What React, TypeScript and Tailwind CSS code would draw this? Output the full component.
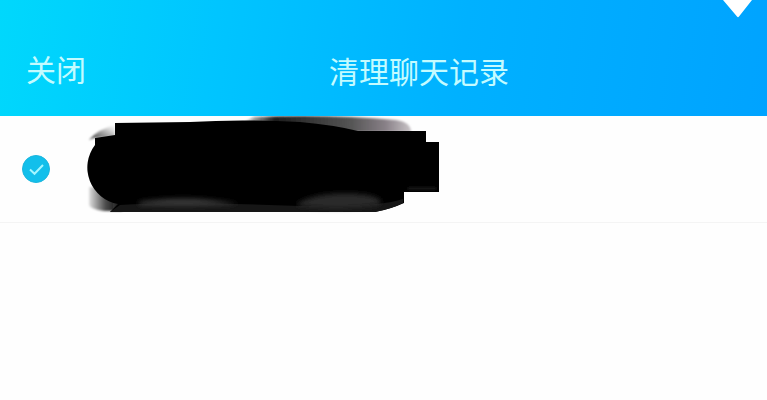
import { useState } from "react";

function PointerMark() {
  return (
    <svg className="absolute right-3.5 top-0" width="32" height="18" viewBox="0 0 32 18" aria-hidden="true">
      <path d="M2 0H31L18 16.5Q17 17.8 16 16.500Z" fill="#fff" />
    </svg>
  );
}

function Header() {
  return (
    <header className="relative flex items-center bg-linear-[98deg,#00d8fc_0%,#00c5ff_28%,#00b1ff_60%,#00a3ff_100%] px-[26px] pt-[46px] pb-[22px] text-3xl leading-12 font-normal text-[#c4fbff]">
      <button type="button" className="-mt-1 shrink-0 cursor-pointer">
        关闭
      </button>
      <h1 className="ml-[34%] shrink-0">清理聊天记录</h1>
      <PointerMark />
    </header>
  );
}

function HiddenContact() {
  return (
    <svg className="shrink-0 overflow-visible" width="354" height="106" viewBox="86 116 354 106" aria-hidden="true">
      <defs>
        <filter id="soft" x="-10%" y="-30%" width="120%" height="160%">
          <feGaussianBlur stdDeviation="1.2" />
        </filter>
        <filter id="softer" x="-10%" y="-60%" width="120%" height="220%">
          <feGaussianBlur stdDeviation="2.500" />
        </filter>
        <linearGradient id="topFade" x1="0" x2="1" y1="0" y2="0">
          <stop offset="0" stopColor="#111" stopOpacity="0" />
          <stop offset=".2" stopColor="#1c1c1c" />
          <stop offset=".65" stopColor="#555" />
          <stop offset=".85" stopColor="#888087" />
          <stop offset="1" stopColor="#c9c4c7" />
        </linearGradient>
        <linearGradient id="leftFade" x1="0" x2="1" y1="0" y2="0">
          <stop offset="0" stopColor="#000" stopOpacity=".12" />
          <stop offset=".5" stopColor="#000" stopOpacity=".7" />
          <stop offset="1" stopColor="#111" />
        </linearGradient>
        <linearGradient id="cornerFade" x1="0" x2="1" y1="1" y2="0">
          <stop offset="0" stopColor="#000" stopOpacity=".8" />
          <stop offset=".75" stopColor="#000" stopOpacity=".15" />
          <stop offset="1" stopColor="#000" stopOpacity="0" />
        </linearGradient>
      </defs>
      <path d="M254 117Q330 114 396 120Q411 122 411 132H340L240 124Z" fill="url(#topFade)" filter="url(#soft)" />
      <path d="M89 140Q98 129 115 125V137L94 138Z" fill="url(#cornerFade)" filter="url(#soft)" />
      <path d="M89 187L122 188V211H104Q90 209 89 205Z" fill="url(#leftFade)" filter="url(#soft)" />
      <path
        d="M115 123L190 122Q240 119 300 122Q334 125 358 131H426V142H439V192H404V203Q391 209 375 212H110L118 204A37 37 0 0 1 95 145V138L115 135Z"
        fill="#000"
      />
      <path d="M120 205Q175 201 300 206L375 204Q391 203 403 199V203Q391 209 375 212H110Z" fill="#161616" />
      <path d="M139 202Q187 194 239 204Q185 207 139 205Z" fill="#3a3a3a" filter="url(#softer)" />
      <path d="M298 203Q323 190 367 195Q388 200 378 205Q340 211 298 206Z" fill="#2b2b2b" filter="url(#softer)" />
      <path d="M408 187H436V190H408Z" fill="#141414" filter="url(#soft)" />
    </svg>
  );
}

function ChatRow() {
  const [checked, setChecked] = useState(true);

  return (
    <li className="flex items-center gap-9 border-b border-[#f4f4f4] pl-[22px]">
      <span className="relative size-7 shrink-0">
        <input
          type="checkbox"
          aria-label="聊天记录"
          checked={checked}
          onChange={() => setChecked(!checked)}
          className="block size-7 cursor-pointer appearance-none rounded-full border border-[#1cb6de] checked:bg-[#12bfeb]"
        />
        {checked && (
          <svg className="pointer-events-none absolute inset-0" viewBox="0 0 28 28" fill="none" aria-hidden="true">
            <path d="M8 14.500L12.500 18.800L21 10" stroke="#a5f6ff" strokeWidth="2" />
          </svg>
        )}
      </span>
      <HiddenContact />
    </li>
  );
}

export default function App() {
  return (
    <div className="min-h-screen bg-[#fefefe] font-['Noto_Sans_CJK_SC',sans-serif]">
      <Header />
      <main>
        <ul>
          <ChatRow />
        </ul>
      </main>
    </div>
  );
}
